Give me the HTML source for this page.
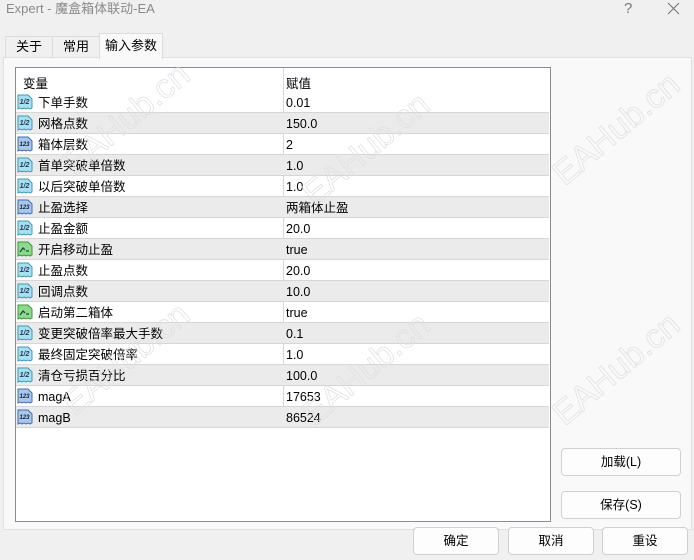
<!DOCTYPE html>
<html><head><meta charset="utf-8"><style>
*{margin:0;padding:0;box-sizing:border-box}
body{width:694px;height:560px;background:#f0f0f0;font-family:"Liberation Sans","Noto Sans CJK SC",sans-serif;font-size:12px;color:#000;position:relative;overflow:hidden}
.abs{position:absolute}
.title{left:6px;top:0px;font-size:13px;color:#8a8a8a;line-height:18px}
.tab{top:36px;height:22px;border:1px solid #dcdcdc;border-bottom:none;background:#f0f0f0;text-align:center;line-height:20px;font-size:13px}
.panel{left:3px;top:57px;width:689px;height:473px;background:#f9f9f9;border:1px solid #e0e0e0}
.tbl{left:15px;top:67px;width:536px;height:455px;background:#fff;border:1px solid #8b8b93}
.row{position:absolute;left:0;width:533px;height:21px;border-bottom:1px solid #d6d6d6}
.row.g{background:#ebebeb}
.row span{position:absolute;top:3px;line-height:16px;font-size:12.5px}
.n{left:22px}.v{left:270px}
.row i{position:absolute;left:1px;top:2px}
.col{position:absolute;left:267px;top:0;width:1px;height:360px;background:#d6d6d6}
.btn{height:28px;border:1px solid #d0d0d0;border-radius:4px;background:#fdfdfd;text-align:center;line-height:26px;font-size:12.5px}
.wm{color:transparent;-webkit-text-stroke:0.7px #dedede;font-size:34px;transform:rotate(-40deg);font-family:"Liberation Sans",sans-serif;white-space:nowrap}
</style></head><body>
<div class="abs title">Expert - 魔盒箱体联动-EA</div>
<div class="abs" style="left:624px;top:0;font-size:15px;color:#777">?</div>
<svg class="abs" style="left:667px;top:2px" width="13" height="13"><path d="M1 1L12 12M12 1L1 12" stroke="#777" stroke-width="1.1"/></svg>
<div class="abs tab" style="left:5px;width:48px">关于</div>
<div class="abs tab" style="left:52px;width:48px">常用</div>
<div class="abs panel"></div>
<div class="abs tab" style="left:99px;top:33px;width:64px;height:26px;background:#f9f9f9;line-height:24px;z-index:2">输入参数</div>
<div class="abs tbl">
<div class="col"></div>
<div class="abs" style="left:7px;top:5px;font-size:12.5px">变量</div>
<div class="abs" style="left:270px;top:5px;font-size:12.5px">赋值</div>
<div id="rows"></div>
</div>
<div class="abs wm" style="left:50px;top:100px">EAHub.cn</div>
<div class="abs wm" style="left:290px;top:130px">EAHub.cn</div>
<div class="abs wm" style="left:540px;top:110px">EAHub.cn</div>
<div class="abs wm" style="left:50px;top:340px">EAHub.cn</div>
<div class="abs wm" style="left:290px;top:350px">EAHub.cn</div>
<div class="abs wm" style="left:540px;top:350px">EAHub.cn</div>
<div class="abs btn" style="left:561px;top:448px;width:120px">加载(L)</div>
<div class="abs btn" style="left:561px;top:491px;width:120px">保存(S)</div>
<div class="abs btn" style="left:413px;top:527px;width:86px">确定</div>
<div class="abs btn" style="left:508px;top:527px;width:86px">取消</div>
<div class="abs btn" style="left:602px;top:527px;width:86px">重设</div>
<script>
var d=[["a","下单手数","0.01"],["a","网格点数","150.0"],["b","箱体层数","2"],["a","首单突破单倍数","1.0"],["a","以后突破单倍数","1.0"],["b","止盈选择","两箱体止盈"],["a","止盈金额","20.0"],["c","开启移动止盈","true"],["a","止盈点数","20.0"],["a","回调点数","10.0"],["c","启动第二箱体","true"],["a","变更突破倍率最大手数","0.1"],["a","最终固定突破倍率","1.0"],["a","清仓亏损百分比","100.0"],["b","magA","17653"],["b","magB","86524"]];
var ic={a:['#a8e0ee','#3a9bb5'],b:['#a9c6ec','#3f6fb0'],c:['#8fd88f','#3a983a']};
var h='';
d.forEach(function(r,k){var c=ic[r[0]];
var t=r[0]=='a'?'<text x="7.5" y="10" font-size="7" font-weight="bold" text-anchor="middle" fill="#235">1/2</text>':r[0]=='b'?'<text x="7.5" y="10" font-size="6" font-weight="bold" text-anchor="middle" fill="#123">123</text>':'<path d="M3 11L6 7L8 9M9 10H12" stroke="#153" stroke-width="1.3" fill="none"/>';
h+='<div class="row'+(k%2?' g':'')+'" style="top:'+(24+k*21)+'px"><i><svg width="16" height="16"><path d="M1 1H11L15 5V14L13 15L11 14L9 15L7 14L5 15L3 14L1 15Z" fill="'+c[0]+'" stroke="'+c[1]+'"/>'+t+'</svg></i><span class="n">'+r[1]+'</span><span class="v">'+r[2]+'</span></div>';});
document.getElementById('rows').innerHTML=h;
</script>
</body></html>
